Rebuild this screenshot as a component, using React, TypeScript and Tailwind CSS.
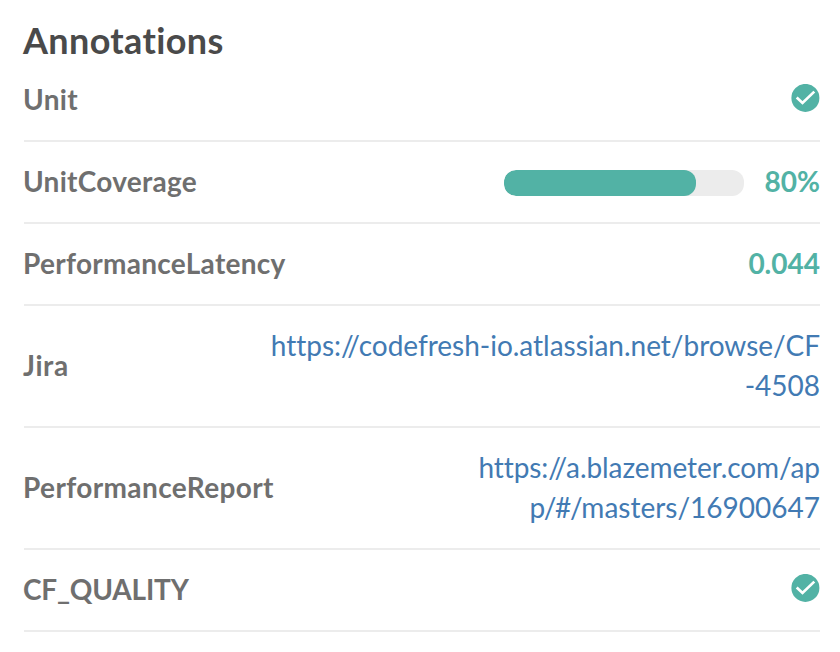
import React from "react";

function Check() {
  return (
    <svg width="29" height="28" viewBox="0 0 29 28" className="mb-[5px] block">
      <circle cx="14.4" cy="13.9" r="14" fill="#52b2a5" />
      <path d="M5.7 13.5L11.5 19L23.3 7.6" fill="none" stroke="#fff" strokeWidth="2.7" />
    </svg>
  );
}

function Row({ label, height, tracking = "", children }: { label: string; height: string; tracking?: string; children: React.ReactNode }) {
  return (
    <div className={`flex items-center justify-between border-b-2 border-[#ececec] ${height}`}>
      <span className={`-ml-px mb-[2px] font-bold text-[#6f6f6f] ${tracking}`}>{label}</span>
      {children}
    </div>
  );
}

export default function App() {
  return (
    <div className="h-[652px] w-[840px] overflow-hidden bg-white pl-6 pr-5 pt-5 font-['Lato',sans-serif] text-[28px] leading-10 [font-variant-ligatures:none]">
      <h1 className="-ml-px h-10 text-[36px] font-bold leading-[40px] tracking-[0.36px] text-[#4a4a4a]">Annotations</h1>
      <Row label="Unit" height="h-[82px]" tracking="tracking-[0.3px]"><Check /></Row>
      <Row label="UnitCoverage" height="h-[82px]" tracking="tracking-[0.27px]">
        <div className="flex items-center">
          <div className="mr-[21px] mt-[2px] h-[26px] w-60 overflow-hidden rounded-[12px] bg-[#ececec]">
            <div className="h-full w-4/5 rounded-[12px] bg-[#52b2a5]" />
          </div>
          <span className="mb-[2px] font-bold text-[#52b2a5]">80%</span>
        </div>
      </Row>
      <Row label="PerformanceLatency" height="h-[82px]" tracking="tracking-[0.29px]">
        <span className="mb-[2px] font-bold text-[#52b2a5]">0.044</span>
      </Row>
      <Row label="Jira" height="h-[122px]" tracking="tracking-[0.6px]">
        <a className="mb-[2px] text-right text-[#427ab3]">
          <span className="tracking-[-0.02px]">https://codefresh-io.atlassian.net/browse/CF</span><br />-4508
        </a>
      </Row>
      <Row label="PerformanceReport" height="h-[122px]" tracking="tracking-[0.38px]">
        <a className="mb-[2px] text-right text-[#427ab3]">
          <span className="tracking-[-0.07px]">https://a.blazemeter.com/ap</span><br />
          <span className="tracking-[-1.3px]">p/#/</span>masters/16900647
        </a>
      </Row>
      <Row label="CF_QUALITY" height="h-[82px]" tracking="tracking-[-0.2px]"><Check /></Row>
    </div>
  );
}
